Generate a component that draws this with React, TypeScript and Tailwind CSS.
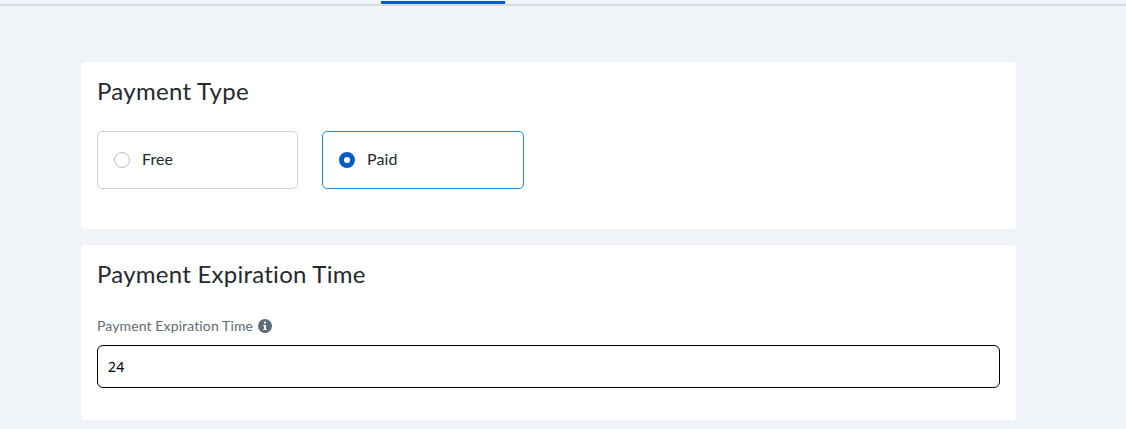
function RadioCard({ label, checked }: { label: string; checked?: boolean }) {
  return (
    <label
      className={`flex h-[58px] items-center rounded-[5px] border bg-white pl-4 ${
        checked ? 'border-[#1e88e5]' : 'border-[#cfcfcf]'
      }`}
    >
      {checked ? (
        <span className="h-4 w-4 rounded-full border-[5px] border-[#0a5cc2] bg-white" />
      ) : (
        <span className="h-4 w-4 rounded-full border border-[#bdbdbd] bg-white" />
      )}
      <span className="ml-[12px] pb-[2px] text-[16px] leading-none tracking-[0.1px] text-[#24292e]">{label}</span>
    </label>
  )
}

export default function App() {
  return (
    <div className="h-[429px] overflow-hidden bg-[#f0f3f8] font-['Lato','Open_Sans',sans-serif]">
      {/* Tab strip */}
      <div className="h-[6px] border-b-2 border-[#d6dae2] pt-[1px]">
        <div className="ml-[381px] h-[3px] w-[124px] bg-[#0a5cc2]" />
      </div>

      <div className="ml-[81px] mt-[56px] flex w-[935px] flex-col gap-4">
        <section className="h-[167px] rounded-[4px] bg-white px-4 pt-[14px]">
          <h2 className="text-[24px] leading-[30px] tracking-[0.3px] text-[#24292e]">Payment Type</h2>
          <div className="mt-[25px] grid grid-cols-[201px_202px] gap-6">
            <RadioCard label="Free" />
            <RadioCard label="Paid" checked />
          </div>
        </section>

        <section className="h-[175px] rounded-[4px] bg-white px-4 pt-[14px]">
          <h2 className="text-[24px] leading-[30px] tracking-[0.25px] text-[#24292e]">Payment Expiration Time</h2>
          <div className="mt-[28px] flex h-[17px] items-center gap-[5px] text-[14px] tracking-[0.12px] text-[#5f6b76]">
            <span>Payment Expiration Time</span>
            <svg viewBox="0 0 16 16" className="h-[14px] w-[14px]" fill="#5f6b76">
              <path
                fillRule="evenodd"
                d="M8 0a8 8 0 1 0 0 16A8 8 0 0 0 8 0Zm0 2.8a1.3 1.3 0 1 1 0 2.6 1.3 1.3 0 0 1 0-2.6ZM10 12.6H6v-1.3h.9V8.2H6V6.9h3.1v4.4h.9v1.3Z"
              />
            </svg>
          </div>
          <input
            readOnly
            value="24"
            className="mt-[11px] h-[43px] w-full rounded-[6px] border border-black bg-white px-[10px] font-['Noto_Sans',sans-serif] text-[14px] tracking-[0.3px] text-black outline-none"
          />
        </section>
      </div>
    </div>
  )
}
